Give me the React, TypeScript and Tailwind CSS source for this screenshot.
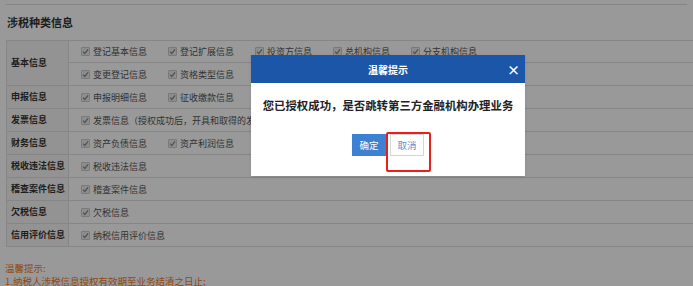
import React from "react";

type Row = { label: string; lines: string[][] };

const rows: Row[] = [
  {
    label: "基本信息",
    lines: [
      ["登记基本信息", "登记扩展信息", "投资方信息", "总机构信息", "分支机构信息"],
      ["变更登记信息", "资格类型信息"],
    ],
  },
  { label: "申报信息", lines: [["申报明细信息", "征收缴款信息"]] },
  {
    label: "发票信息",
    lines: [["发票信息（授权成功后，开具和取得的发票信息均可查询）"]],
  },
  { label: "财务信息", lines: [["资产负债信息", "资产利润信息"]] },
  { label: "税收违法信息", lines: [["税收违法信息"]] },
  { label: "稽查案件信息", lines: [["稽查案件信息"]] },
  { label: "欠税信息", lines: [["欠税信息"]] },
  { label: "信用评价信息", lines: [["纳税信用评价信息"]] },
];

function CheckItem({ text }: { text: string }) {
  return (
    <span className="flex items-center gap-[3px] mr-[21px] whitespace-nowrap">
      <span className="w-[9px] h-[9px] flex items-center justify-center bg-[#ececec] border border-[#cccccc] rounded-[1px]">
        <svg width="7" height="7" viewBox="0 0 10 10">
          <path d="M1.5 5.2 L4 7.8 L8.7 2" fill="none" stroke="#888" strokeWidth="1.8" />
        </svg>
      </span>
      <span className="text-[9px] leading-none text-[#555]">{text}</span>
    </span>
  );
}

export default function App() {
  return (
    <div
      className="relative w-[693px] h-[286px] overflow-hidden bg-white"
      style={{ fontFamily: '"Noto Sans CJK SC", "Liberation Sans", sans-serif' }}
    >
      <div className="h-[5px] mx-[6px] border-b border-[#dcdcdc]" />

      <h2 className="mt-[11px] ml-[7px] text-[11px] leading-[12px] font-bold text-[#333]">
        涉税种类信息
      </h2>

      <div className="mt-[12px] ml-[6px] border-t border-l border-[#e0e0e0]">
        {rows.map((r) => (
          <div key={r.label} className="grid grid-cols-[62px_1fr] border-b border-[#e0e0e0]">
            <div className="flex items-center pl-[4px] border-r border-[#e0e0e0] bg-[#f6f6f6] text-[9px] font-bold text-[#333]">
              {r.label}
            </div>
            <div className="flex flex-col">
              {r.lines.map((line, i) => (
                <div
                  key={i}
                  className={
                    "h-[22px] flex items-center pl-[12px] " +
                    (i < r.lines.length - 1 ? "border-b border-[#e0e0e0]" : "")
                  }
                >
                  {line.map((t) => (
                    <CheckItem key={t} text={t} />
                  ))}
                </div>
              ))}
            </div>
          </div>
        ))}
      </div>

      <div className="mt-[15px] ml-[5px] text-[9.5px] leading-[13px] text-[#f07a24]">
        <p>温馨提示:</p>
        <p>1.纳税人涉税信息授权有效期至业务结清之日止;</p>
      </div>

      <div className="absolute inset-0 bg-black/40" />

      <div className="absolute left-[251px] top-[55px] w-[274px] h-[121px] bg-white flex flex-col shadow">
        <div className="relative h-[28px] bg-[#1b56a8] flex items-center justify-center">
          <span className="text-[10px] font-bold text-white">温馨提示</span>
          <span className="absolute right-[5px] top-[8px] text-[13px] leading-[13px] font-bold text-white">
            ×
          </span>
        </div>
        <p className="mt-[15px] text-center text-[11.4px] leading-[14px] font-bold text-[#222]">
          您已授权成功，是否跳转第三方金融机构办理业务
        </p>
        <div className="mt-[22px] flex justify-center gap-[4px]">
          <button className="w-[34px] h-[22px] bg-[#3d82d2] text-white text-[9.5px]">确定</button>
          <button className="w-[34px] h-[22px] bg-white border border-[#d4d4d4] text-[#5a8fd0] text-[9.5px]">
            取消
          </button>
        </div>
      </div>

      <div className="absolute left-[386px] top-[132px] w-[45px] h-[40px] border-2 border-[#e8201a] rounded-[2px]" />
    </div>
  );
}
